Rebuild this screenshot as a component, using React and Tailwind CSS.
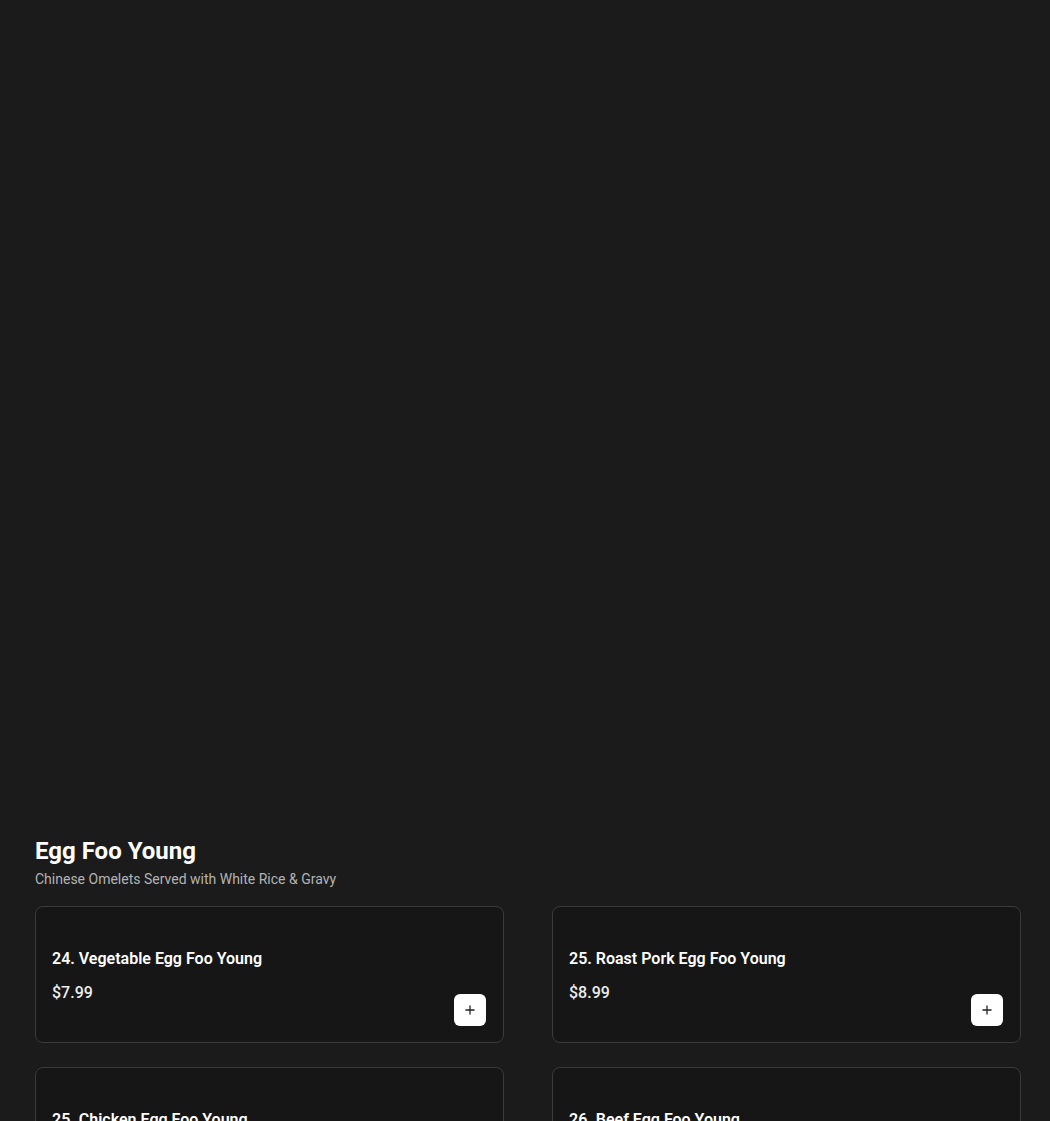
import { Plus } from 'lucide-react';

const items = [
  { id: 1, name: '24. Vegetable Egg Foo Young', price: '$7.99' },
  { id: 2, name: '25. Roast Pork Egg Foo Young', price: '$8.99' },
  { id: 3, name: '25. Chicken Egg Foo Young', price: '$8.99' },
  { id: 4, name: '26. Beef Egg Foo Young', price: '$9.99' },
];

function ItemCard({ item }) {
  return (
    <div className="flex h-[137px] justify-between rounded-lg border border-[#3a3a3a] bg-[#161616] pb-4 pl-4 pr-[17px] pt-10">
      <div className="self-start">
        <h3 className="text-base font-semibold leading-6 text-white">{item.name}</h3>
        <p className="mt-[10px] text-base font-medium leading-6 text-[#ececec]">{item.price}</p>
      </div>
      <button className="flex h-8 w-8 items-center justify-center self-end rounded-md bg-white text-[#222]">
        <Plus size={14} strokeWidth={2.2} />
      </button>
    </div>
  );
}

export default function App() {
  return (
    <div className="min-h-screen bg-[#1b1b1b] pl-[35px] pr-[29px] font-['Roboto',sans-serif]">
      <div className="h-[837px]" />
      <section>
        <h2 className="text-2xl font-bold leading-7 text-white">Egg Foo Young</h2>
        <p className="mt-1 text-sm leading-5 text-[#b3b3b3]">Chinese Omelets Served with White Rice &amp; Gravy</p>
        <div className="mt-[17px] grid grid-cols-2 gap-x-12 gap-y-6 pb-10">
          {items.map((item) => (
            <ItemCard key={item.id} item={item} />
          ))}
        </div>
      </section>
    </div>
  );
}
